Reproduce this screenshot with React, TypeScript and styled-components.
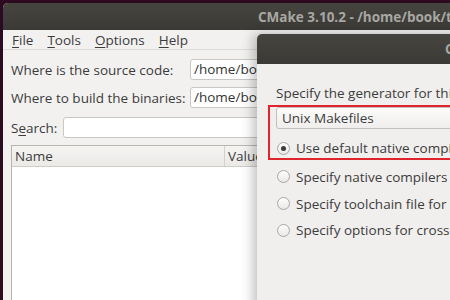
import React from 'react';
import styled, { createGlobalStyle } from 'styled-components';

const Global = createGlobalStyle`
  html, body {
    margin: 0;
    padding: 0;
    width: 450px;
    height: 300px;
    overflow: hidden;
    background: #2c0a20;
  }
  * { box-sizing: border-box; }
`;

const Desktop = styled.div`
  position: relative;
  width: 450px;
  height: 300px;
  padding: 3px 0 0 3px;
  overflow: hidden;
  font-family: "Open Sans", "DejaVu Sans", sans-serif;
  font-size: 13.5px;
  color: #3c3c3c;
`;

const Window = styled.div`
  width: 700px;
  height: 400px;
  background: #f2f1f0;
  border-radius: 5px 5px 0 0;
  overflow: hidden;
  display: flex;
  flex-direction: column;
`;

const TitleBar = styled.div<{ $indent: number; $h: number }>`
  height: ${p => p.$h}px;
  flex-shrink: 0;
  background: linear-gradient(#45443f, #3b3a36);
  color: #a8a7a2;
  font-weight: 700;
  font-size: 13.5px;
  display: flex;
  align-items: center;
  padding-left: ${p => p.$indent}px;
  white-space: nowrap;
`;

const MenuBar = styled.div`
  height: 20px;
  display: flex;
  align-items: center;
  gap: 14px;
  padding-left: 9px;
  border-bottom: 1px solid #dedcd8;
  background: #f2f1f0;
`;

const MenuItem = styled.span`
  color: #3c3c3c;
`;

const Accel = styled.u`
  text-decoration-thickness: 1px;
  text-underline-offset: 2px;
`;

const Content = styled.div`
  padding: 9px 0 0 8px;
  display: flex;
  flex-direction: column;
`;

const FieldRow = styled.div<{ $gap: number }>`
  display: flex;
  align-items: center;
  height: 21px;
  margin-bottom: ${p => p.$gap}px;
`;

const Label = styled.span<{ $w: number }>`
  width: ${p => p.$w}px;
  flex-shrink: 0;
  white-space: nowrap;
`;

const Input = styled.div`
  width: 300px;
  height: 21px;
  background: #fff;
  border: 1px solid #c9c7c2;
  border-radius: 3px;
  padding-left: 3px;
  line-height: 19px;
  white-space: nowrap;
  color: #333;
`;

const Table = styled.div`
  width: 600px;
  height: 200px;
  border: 1px solid #b9b6b0;
  background: #fff;
`;

const HeaderRow = styled.div`
  display: flex;
  height: 21px;
  background: linear-gradient(#f5f4f2, #ebeae7);
  border-bottom: 1px solid #cfcdc8;
`;

const HeaderCell = styled.div<{ $w: number }>`
  width: ${p => p.$w}px;
  padding-left: 3px;
  line-height: 20px;
  border-right: 1px solid #d3d1cc;
`;

const Dialog = styled.div`
  position: absolute;
  left: 257px;
  top: 34px;
  width: 320px;
  height: 300px;
  background: #f0efed;
  border-radius: 5px 5px 0 0;
  overflow: hidden;
  box-shadow: -4px 0 12px rgba(0, 0, 0, 0.25);
  display: flex;
  flex-direction: column;
`;

const DialogBody = styled.div`
  padding: 18px 0 0 11px;
  display: flex;
  flex-direction: column;
`;

const Prompt = styled.div`
  padding-left: 8px;
  height: 22px;
  line-height: 22px;
  margin-bottom: 1px;
  white-space: nowrap;
`;

const Highlight = styled.div`
  border: 2px solid #e0242b;
  padding: 0 0 0 6px;
  width: 300px;
  margin-bottom: 3px;
`;

const Combo = styled.div`
  height: 22px;
  background: linear-gradient(#fbfbfa, #efeeec);
  border: 1px solid #c2c0bb;
  border-radius: 3px;
  padding-left: 5px;
  line-height: 20px;
  margin-bottom: 9px;
`;

const RadioRow = styled.div<{ $pad: number; $h: number }>`
  display: flex;
  align-items: center;
  height: ${p => p.$h}px;
  padding-left: ${p => p.$pad}px;
  white-space: nowrap;
`;

const RadioDot = styled.span<{ $on?: boolean }>`
  width: 13px;
  height: 13px;
  border-radius: 50%;
  border: 1px solid #a9a7a2;
  background: linear-gradient(#fdfdfd, #e9e8e6);
  margin-right: 6px;
  display: flex;
  align-items: center;
  justify-content: center;
  flex-shrink: 0;
  &::after {
    content: '';
    width: 5px;
    height: 5px;
    border-radius: 50%;
    background: ${p => (p.$on ? '#3c3c3c' : 'transparent')};
  }
`;

export default function App() {
  return (
    <>
      <Global />
      <Desktop>
        <Window>
          <TitleBar $indent={255} $h={27}>CMake 3.10.2 - /home/book/tools/build</TitleBar>
          <MenuBar>
            <MenuItem><Accel>F</Accel>ile</MenuItem>
            <MenuItem><Accel>T</Accel>ools</MenuItem>
            <MenuItem><Accel>O</Accel>ptions</MenuItem>
            <MenuItem><Accel>H</Accel>elp</MenuItem>
          </MenuBar>
          <Content>
            <FieldRow $gap={7}>
              <Label $w={179}>Where is the source code:</Label>
              <Input>/home/book/tools</Input>
            </FieldRow>
            <FieldRow $gap={9}>
              <Label $w={179}>Where to build the binaries:</Label>
              <Input>/home/book/tools/build</Input>
            </FieldRow>
            <FieldRow $gap={7}>
              <Label $w={52}>S<Accel>e</Accel>arch:</Label>
              <Input />
            </FieldRow>
            <Table>
              <HeaderRow>
                <HeaderCell $w={213}>Name</HeaderCell>
                <HeaderCell $w={300}>Value</HeaderCell>
              </HeaderRow>
            </Table>
          </Content>
        </Window>
        <Dialog>
          <TitleBar $indent={188} $h={30}>CMakeSetup</TitleBar>
          <DialogBody>
            <Prompt>Specify the generator for this project</Prompt>
            <Highlight>
              <Combo>Unix Makefiles</Combo>
              <RadioRow $pad={1} $h={20}>
                <RadioDot $on />
                Use default native compilers
              </RadioRow>
            </Highlight>
            <RadioRow $pad={9} $h={27}>
              <RadioDot />
              Specify native compilers
            </RadioRow>
            <RadioRow $pad={9} $h={27}>
              <RadioDot />
              Specify toolchain file for cross-compiling
            </RadioRow>
            <RadioRow $pad={9} $h={26}>
              <RadioDot />
              Specify options for cross-compiling
            </RadioRow>
          </DialogBody>
        </Dialog>
      </Desktop>
    </>
  );
}
